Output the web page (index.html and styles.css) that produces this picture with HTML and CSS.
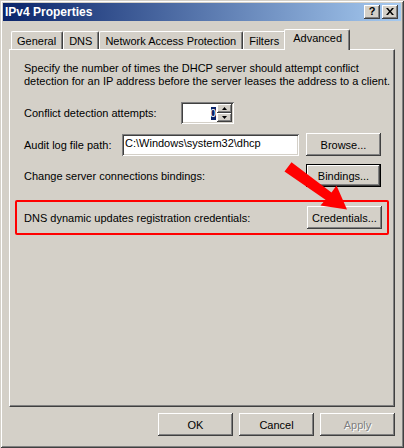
FILE: index.html
```html
<!DOCTYPE html>
<html>
<head>
<meta charset="utf-8">
<link rel="stylesheet" href="styles.css">
</head>
<body>
<div class="window">
  <div class="titlebar">
    <span class="title">IPv4 Properties</span>
    <div class="tb-buttons">
      <span class="tbtn">?</span>
      <span class="tbtn tclose">
        <svg width="8" height="7" viewBox="0 0 8 7"><path d="M0 0h2l2 2.5L6 0h2L5 3.5 8 7H6L4 4.5 2 7H0l3-3.5z" fill="#000"/></svg>
      </span>
    </div>
  </div>
  <div class="client">
    <div class="tabs">
      <span class="tab first">General</span>
      <span class="tab">DNS</span>
      <span class="tab">Network Access Protection</span>
      <span class="tab">Filters</span>
      <span class="tab active">Advanced</span>
    </div>
    <div class="page">
      <p class="intro">Specify the number of times the DHCP server should attempt conflict detection for an IP address before the server leases the address to a client.</p>
      <div class="row r-conflict">
        <span class="label">Conflict detection attempts:</span>
        <div class="spin">
          <div class="spin-field"><span class="sel">0</span></div>
          <div class="spin-btns">
            <span class="sbtn"><svg width="5" height="3" viewBox="0 0 5 3"><path d="M2.5 0L5 3H0z" fill="#000"/></svg></span>
            <span class="sbtn"><svg width="5" height="3" viewBox="0 0 5 3"><path d="M0 0h5L2.5 3z" fill="#000"/></svg></span>
          </div>
        </div>
      </div>
      <div class="row r-audit">
        <span class="label l-audit">Audit log file path:</span>
        <div class="field">C:\Windows\system32\dhcp</div>
        <span class="btn">Browse...</span>
      </div>
      <div class="row r-bind">
        <span class="label grow">Change server connections bindings:</span>
        <span class="btn default">Bindings...</span>
      </div>
      <div class="row r-cred highlight">
        <span class="label grow">DNS dynamic updates registration credentials:</span>
        <span class="btn">Credentials...</span>
      </div>
      <svg class="arrow" width="70" height="52" viewBox="282 160 70 52">
        <polygon points="284.5,171.5 291.5,162.2 331.5,192.5 336.5,185.5 347,209.5 320.5,205.5 325.5,199.8" fill="#ff0000"/>
      </svg>
    </div>
    <div class="footer">
      <span class="btn">OK</span>
      <span class="btn">Cancel</span>
      <span class="btn disabled">Apply</span>
    </div>
  </div>
</div>
</body>
</html>
```

FILE: styles.css
```css
* { box-sizing: border-box; }
html, body { margin: 0; padding: 0; }
body {
  background: #d4d0c8;
  font-family: "Liberation Sans", Arial, sans-serif;
  font-size: 11px;
  color: #000;
}
.window {
  width: 404px;
  height: 448px;
  padding: 3px;
  background: #d4d0c8;
  box-shadow: inset 1px 1px #d4d0c8, inset -1px -1px #404040, inset 2px 2px #ffffff, inset -2px -2px #808080;
  display: flex;
  flex-direction: column;
}
.titlebar {
  height: 18px;
  background: linear-gradient(to right, #0a246a, #a6caf0);
  display: flex;
  align-items: center;
  justify-content: space-between;
  padding: 0 3px 0 2px;
}
.title {
  color: #fff;
  font-family: "Liberation Sans", Arial, sans-serif;
  font-weight: bold;
  font-size: 12px;
}
.tb-buttons { display: flex; gap: 2px; }
.tbtn {
  width: 16px;
  height: 14px;
  background: #d4d0c8;
  box-shadow: inset -1px -1px #404040, inset 1px 1px #ffffff, inset -2px -2px #808080;
  display: flex;
  align-items: center;
  justify-content: center;
  font-weight: bold;
  font-size: 11px;
  line-height: 1;
  padding-bottom: 1px;
}
.client {
  flex: 1;
  display: flex;
  flex-direction: column;
  padding: 8px 6px 0 6px;
}
.tabs {
  height: 20px;
  display: flex;
  align-items: flex-end;
  padding-left: 2px;
}
.tab {
  height: 18px;
  padding: 3px 6px 0 5px;
  border-top: 1px solid #fff;
  border-left: 1px solid #fff;
  border-right: 1px solid #404040;
  box-shadow: inset -1px 0 #808080;
  border-radius: 2px 2px 0 0;
  white-space: nowrap;
}
.tab.active {
  height: 21px;
  margin-bottom: -1px;
  margin-left: -2px;
  padding: 2px 7px 0 8px;
  background: #d4d0c8;
  position: relative;
  z-index: 1;
}
.page {
  height: 358px;
  position: relative;
  border-top: 1px solid #fff;
  border-left: 1px solid #fff;
  border-right: 1px solid #404040;
  border-bottom: 1px solid #404040;
  box-shadow: inset -1px -1px #808080;
  padding: 12px 0 0 14px;
}
.intro {
  margin: 0;
  line-height: 13px;
  width: 370px;
}
.row {
  display: flex;
  align-items: center;
}
.r-conflict { margin-top: 14px; height: 22px; }
.r-conflict .label { width: 157px; }
.spin {
  display: flex;
  width: 53px;
  height: 22px;
  background: #fff;
  box-shadow: inset 1px 1px #808080, inset -1px -1px #fff, inset 2px 2px #404040, inset -2px -2px #d4d0c8;
  padding: 2px;
}
.spin-field {
  flex: 1;
  display: flex;
  justify-content: flex-end;
  align-items: center;
  padding-right: 1px;
}
.sel {
  background: #0a246a;
  color: #fff;
  width: 5px;
  height: 13px;
  overflow: hidden;
  line-height: 13px;
  text-indent: -1px;
}
.spin-btns {
  width: 15px;
  display: flex;
  flex-direction: column;
}
.sbtn {
  flex: 1;
  background: #d4d0c8;
  box-shadow: inset -1px -1px #404040, inset 1px 1px #fff, inset -2px -2px #808080;
  display: flex;
  align-items: center;
  justify-content: center;
}
.r-audit { margin-top: 9px; height: 23px; }
.l-audit { width: 98px; }
.field {
  width: 177px;
  height: 22px;
  background: #fff;
  box-shadow: inset 1px 1px #808080, inset -1px -1px #fff, inset 2px 2px #404040, inset -2px -2px #d4d0c8;
  padding: 3px 0 0 3px;
  margin-right: 7px;
}
.btn {
  width: 75px;
  height: 23px;
  background: #d4d0c8;
  box-shadow: inset -1px -1px #404040, inset 1px 1px #ffffff, inset -2px -2px #808080;
  display: flex;
  align-items: center;
  justify-content: center;
  flex: none;
}
.btn.default {
  box-shadow: inset 0 0 0 1px #000, inset -2px -2px #404040, inset 2px 2px #ffffff, inset -3px -3px #808080;
}
.grow { flex: 1; }
.r-bind { margin-top: 8px; padding-right: 13px; }
.r-cred {
  margin-top: 13px;
  margin-left: -9px;
  margin-right: 5px;
  height: 35px;
  border: 2px solid #ff0000;
  border-radius: 2px;
  padding: 0 5px 0 7px;
}
.arrow {
  position: absolute;
  left: 272px;
  top: 110px;
}
.footer {
  display: flex;
  justify-content: flex-end;
  gap: 6px;
  padding-top: 6px;
}
.btn.disabled {
  color: #808080;
  text-shadow: 1px 1px #fff;
}
```
